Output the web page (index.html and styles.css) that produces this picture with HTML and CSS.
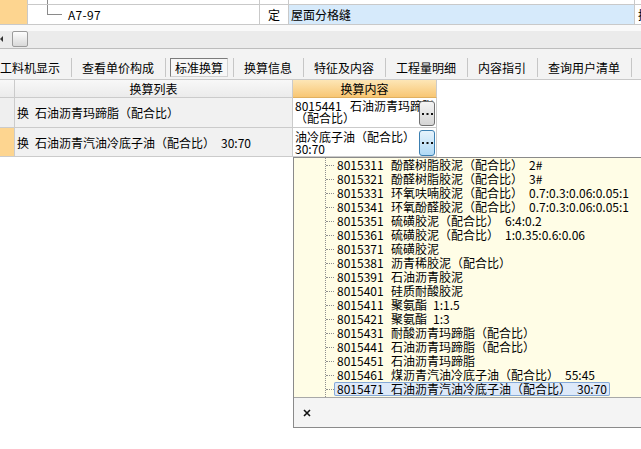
FILE: index.html
```html
<!DOCTYPE html>
<html lang="zh-CN">
<head>
<meta charset="utf-8">
<title>标准换算</title>
<link rel="stylesheet" href="styles.css">
</head>
<body>
<div class="app">
  <div class="topgrid">
    <div class="c ind prow"></div>
    <div class="c prow"><span class="vline"></span></div>
    <div class="c prow"></div>
    <div class="c prow"></div>
    <div class="c prow last"></div>
    <div class="c ind"></div>
    <div class="c tree"><span class="branch"></span><span class="code7">A7-97</span></div>
    <div class="c ding">定</div>
    <div class="c bname">屋面分格缝</div>
    <div class="c last">换</div>
  </div>

  <div class="hscroll">
    <span class="arrow"></span>
    <span class="thumb"></span>
  </div>

  <div class="tabs">
    <div class="tab first">工料机显示</div>
    <div class="tab">查看单价构成</div>
    <div class="tab sel"><span class="selbox">标准换算</span></div>
    <div class="tab">换算信息</div>
    <div class="tab">特征及内容</div>
    <div class="tab">工程量明细</div>
    <div class="tab">内容指引</div>
    <div class="tab">查询用户清单</div>
  </div>

  <div class="tbl">
    <div class="t hd ind-h"></div>
    <div class="t hd hl">换算列表</div>
    <div class="t hd hc">换算内容</div>
    <div class="t blank"></div>

    <div class="t r1 ind-g"></div>
    <div class="t r1 item">换&ensp;石油沥青玛蹄脂（配合比）</div>
    <div class="t r1 content">
      <div class="ctext"><span class="ccode">8015441</span>石油沥青玛蹄脂<br>（配合比）</div>
      <span class="btn grey"><svg width="11" height="2" viewBox="0 0 11 2"><rect x="0" y="0" width="2" height="2" fill="#111"/><rect x="4.5" y="0" width="2" height="2" fill="#111"/><rect x="9" y="0" width="2" height="2" fill="#111"/></svg></span>
    </div>
    <div class="t blank"></div>

    <div class="t r2 ind-o"></div>
    <div class="t r2 item">换&ensp;石油沥青汽油冷底子油（配合比）&ensp;30:70</div>
    <div class="t r2 content">
      <div class="ctext two">油冷底子油（配合比）<br>30:70</div>
      <span class="btn blue"><svg width="11" height="2" viewBox="0 0 11 2"><rect x="0" y="0" width="2" height="2" fill="#111"/><rect x="4.5" y="0" width="2" height="2" fill="#111"/><rect x="9" y="0" width="2" height="2" fill="#111"/></svg></span>
    </div>
    <div class="t blank"></div>
  </div>

  <div class="dd">
    <ul class="dd-list">
      <li><span class="conn"></span><span class="lab"><span class="dcode">8015311</span><span class="dname">酚醛树脂胶泥（配合比）&ensp;2#</span></span></li>
      <li><span class="conn"></span><span class="lab"><span class="dcode">8015321</span><span class="dname">酚醛树脂胶泥（配合比）&ensp;3#</span></span></li>
      <li><span class="conn"></span><span class="lab"><span class="dcode">8015331</span><span class="dname">环氧呋喃胶泥（配合比）&ensp;0.7:0.3:0.06:0.05:1</span></span></li>
      <li><span class="conn"></span><span class="lab"><span class="dcode">8015341</span><span class="dname">环氧酚醛胶泥（配合比）&ensp;0.7:0.3:0.06:0.05:1</span></span></li>
      <li><span class="conn"></span><span class="lab"><span class="dcode">8015351</span><span class="dname">硫磺胶泥（配合比）&ensp;6:4:0.2</span></span></li>
      <li><span class="conn"></span><span class="lab"><span class="dcode">8015361</span><span class="dname">硫磺胶泥（配合比）&ensp;1:0.35:0.6:0.06</span></span></li>
      <li><span class="conn"></span><span class="lab"><span class="dcode">8015371</span><span class="dname">硫磺胶泥</span></span></li>
      <li><span class="conn"></span><span class="lab"><span class="dcode">8015381</span><span class="dname">沥青稀胶泥（配合比）</span></span></li>
      <li><span class="conn"></span><span class="lab"><span class="dcode">8015391</span><span class="dname">石油沥青胶泥</span></span></li>
      <li><span class="conn"></span><span class="lab"><span class="dcode">8015401</span><span class="dname">硅质耐酸胶泥</span></span></li>
      <li><span class="conn"></span><span class="lab"><span class="dcode">8015411</span><span class="dname">聚氨酯&ensp;1:1.5</span></span></li>
      <li><span class="conn"></span><span class="lab"><span class="dcode">8015421</span><span class="dname">聚氨酯&ensp;1:3</span></span></li>
      <li><span class="conn"></span><span class="lab"><span class="dcode">8015431</span><span class="dname">耐酸沥青玛蹄脂（配合比）</span></span></li>
      <li><span class="conn"></span><span class="lab"><span class="dcode">8015441</span><span class="dname">石油沥青玛蹄脂（配合比）</span></span></li>
      <li><span class="conn"></span><span class="lab"><span class="dcode">8015451</span><span class="dname">石油沥青玛蹄脂</span></span></li>
      <li><span class="conn"></span><span class="lab"><span class="dcode">8015461</span><span class="dname">煤沥青汽油冷底子油（配合比）&ensp;55:45</span></span></li>
      <li><span class="conn"></span><span class="lab sel"><span class="dcode">8015471</span><span class="dname">石油沥青汽油冷底子油（配合比）&ensp;30:70</span></span></li>
    </ul>
    <div class="dd-foot">
      <svg class="close" width="8" height="8" viewBox="0 0 8 8"><path d="M1 1 L7 7 M7 1 L1 7" stroke="#111" stroke-width="1.6" fill="none"/></svg>
    </div>
  </div>
</div>
</body>
</html>
```

FILE: styles.css
```css
html, body {
  margin: 0;
  padding: 0;
  width: 641px;
  height: 449px;
  overflow: hidden;
  background: #fff;
}

body {
  font-family: "Noto Sans CJK SC", "Liberation Sans", sans-serif;
  font-size: 12px;
  color: #000;
}

.app {
  position: relative;
  width: 641px;
  height: 449px;
  overflow: hidden;
}

/* ---------- top grid rows ---------- */
.topgrid {
  display: grid;
  grid-template-columns: 28px 232px 29px 346px 1fr;
  grid-template-rows: 5px 20px;
}

.c {
  box-sizing: border-box;
  border-right: 1px solid #c9c9c9;
  border-bottom: 1px solid #c9c9c9;
  overflow: hidden;
  white-space: nowrap;
  line-height: 19px;
}

.c.prow {
  line-height: 0;
}

.c.ind {
  background: #fdd590;
}

.c.ind.prow {
  border-bottom-color: #fdd590;
}

.c.last {
  border-right: none;
  padding-left: 3px;
}

.vline {
  display: block;
  margin-left: 19px;
  width: 0;
  height: 100%;
  border-left: 1px solid #8a8a8a;
}

.tree {
  display: flex;
  align-items: flex-start;
}

.branch {
  flex: none;
  box-sizing: border-box;
  margin-left: 19px;
  width: 15px;
  height: 10px;
  border-left: 1px solid #8a8a8a;
  border-bottom: 1px solid #8a8a8a;
}

.code7 {
  margin-left: 6px;
  letter-spacing: 0.3px;
}

.ding {
  text-align: center;
}

.bname {
  background: #d6eafb;
  padding-left: 2px;
}

/* ---------- horizontal scrollbar ---------- */
.hscroll {
  box-sizing: border-box;
  height: 24px;
  padding-top: 6px;
  border-bottom: 1px solid #bdbdbd;
  background: linear-gradient(#f9f9f9 0, #f9f9f9 6px, #ebebeb 6px, #ebebeb 100%);
  display: flex;
  align-items: flex-start;
}

.arrow {
  flex: none;
  width: 0;
  height: 0;
  margin-top: 5px;
  border-top: 3px solid transparent;
  border-bottom: 3px solid transparent;
  border-right: 3px solid #333;
}

.thumb {
  flex: none;
  box-sizing: border-box;
  margin-left: 9px;
  width: 16px;
  height: 16px;
  border: 1px solid #9c9c9c;
  border-radius: 2px;
  background: linear-gradient(#fdfdfd, #d9d9d9);
}

/* ---------- tabs ---------- */
.tabs {
  box-sizing: border-box;
  height: 31px;
  padding-top: 9px;
  background: #f3f3f3;
  border-bottom: 1px solid #c9c9c9;
  display: flex;
  align-items: flex-start;
  white-space: nowrap;
}

.tab {
  flex: none;
  padding: 0 11px 0 10px;
  line-height: 19px;
  height: 19px;
  border-right: 1px solid #c6c6c6;
}

.tab.first {
  padding-left: 0;
}

.tab.sel {
  padding: 0 5px 0 4px;
}

.selbox {
  display: block;
  box-sizing: border-box;
  height: 19px;
  line-height: 17px;
  padding: 0 4px;
  border-top: 1px solid #7c7c7c;
  border-left: 1px solid #7c7c7c;
  border-right: 1px solid #d2d2d2;
  border-bottom: 1px solid #d2d2d2;
  background: #f7f7f7;
}

/* ---------- conversion table ---------- */
.tbl {
  display: grid;
  grid-template-columns: 15px 278px 144px 1fr;
  grid-template-rows: 18px 30px 29px;
}

.t {
  box-sizing: border-box;
  border-right: 1px solid #cbcbcb;
  border-bottom: 1px solid #cbcbcb;
  white-space: nowrap;
  overflow: hidden;
}

.t.blank {
  border: none;
  background: #fff;
}

.t.hd {
  line-height: 17px;
  text-align: center;
}

.ind-h, .hl {
  background: linear-gradient(#f8f8f8, #ebebeb);
}

.hc {
  background: linear-gradient(#fde6b6, #f8c673);
  border-bottom-color: #e0b060;
}

.ind-g {
  background: #efefef;
}

.ind-o {
  background: #fdd590;
}

.item {
  background: #f1f1f1;
  padding-left: 2px;
  display: flex;
  align-items: center;
}

.content {
  background: #fff;
  display: grid;
  overflow: visible;
}

.ctext {
  grid-area: 1 / 1;
  padding: 2px 0 0 2px;
  line-height: 12px;
  overflow: hidden;
  white-space: nowrap;
}

.ctext.two {
  padding-top: 3px;
}

.ccode {
  display: inline-block;
  width: 55px;
}

.btn {
  grid-area: 1 / 1;
  justify-self: end;
  align-self: start;
  box-sizing: border-box;
  width: 16px;
  margin-right: 1px;
  display: flex;
  align-items: center;
  justify-content: center;
}

.btn.grey {
  margin-top: 3px;
  height: 25px;
  border: 1px solid #707070;
  border-radius: 3px;
  background: linear-gradient(#f4f4f4, #d5d5d5);
}

.btn.blue {
  margin-top: 2px;
  height: 26px;
  border: 1px solid #3c7fb1;
  border-radius: 3px;
  background: linear-gradient(#e6f3fc, #b1daf6);
}

/* ---------- dropdown ---------- */
.dd {
  position: absolute;
  left: 293px;
  top: 157px;
  width: 360px;
  border: 1px solid #8a8a8a;
  border-right: none;
  background: #fffde6;
}

.dd-list {
  list-style: none;
  margin: 0 0 0 31px;
  padding: 0 0 1px 0;
  border-left: 1px dotted #8f8f8f;
}

.dd-list li {
  display: flex;
  align-items: flex-start;
  height: 14px;
  line-height: 14px;
  white-space: nowrap;
}

.conn {
  flex: none;
  width: 8px;
  height: 7px;
  border-bottom: 1px dotted #8f8f8f;
}

.lab {
  display: flex;
  padding: 0 3px;
  height: 14px;
}

.lab.sel {
  background: #dde9f9;
  box-shadow: inset 0 0 0 1px #85a9d8;
  border-radius: 2px;
}

.dcode {
  flex: none;
  width: 54px;
}

.dfoot, .dd-foot {
  box-sizing: border-box;
  height: 30px;
  border-top: 1px solid #a8a8a8;
  background: #f4f4f4;
  display: flex;
  align-items: center;
  padding-left: 9px;
}

.close {
  display: block;
}
```
